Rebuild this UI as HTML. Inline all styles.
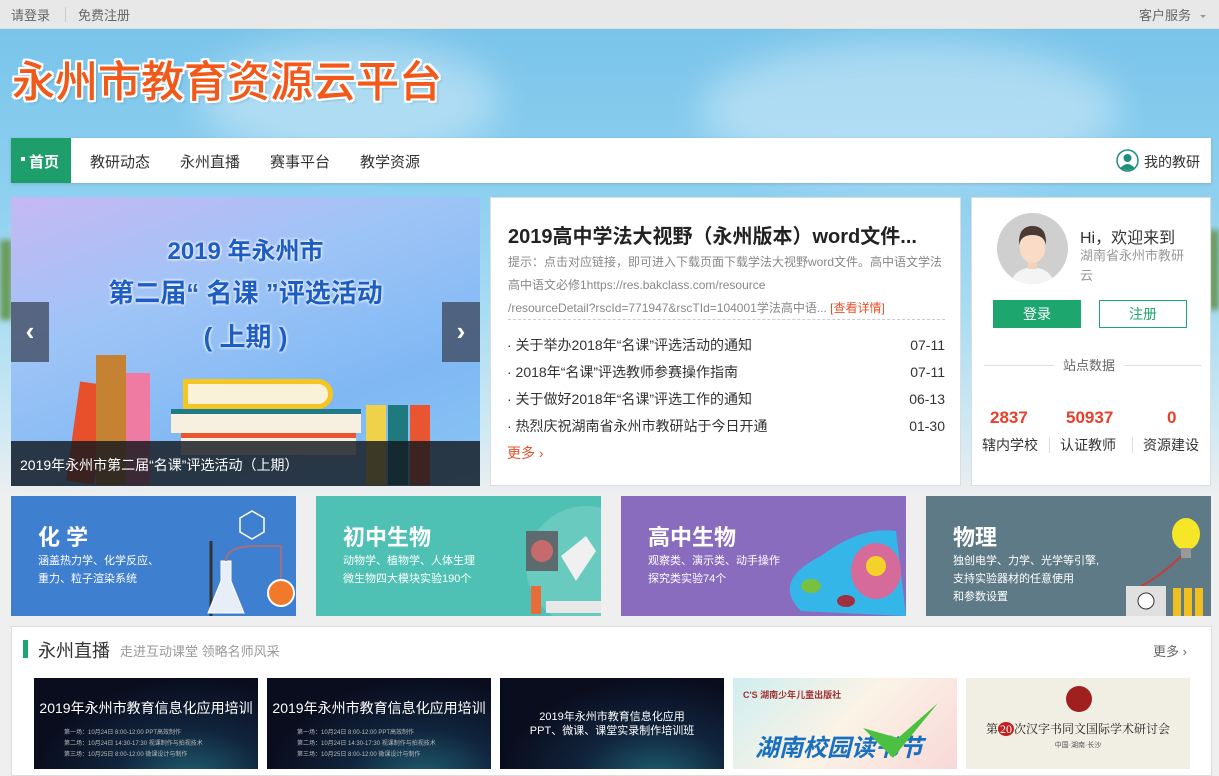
<!DOCTYPE html>
<html><head><meta charset="utf-8">
<style>
*{margin:0;padding:0;box-sizing:border-box}
body{width:1219px;height:769px;overflow:hidden;background:#efefef;font-family:"Liberation Sans","Noto Sans CJK SC","Microsoft YaHei",sans-serif;position:relative;color:#333}
.abs{position:absolute}
.top{left:0;top:0;width:1219px;height:29px;background:#e8e8e8;font-size:13px;color:#666;border-bottom:1px solid #ddd}
.sky{left:0;top:29px;width:1219px;height:470px;background:linear-gradient(180deg,#79c4ea 0%,#8ed0f0 35%,#a8dcf2 60%,#cfe9f3 85%,#efefef 100%)}
.cloud{border-radius:50%;background:rgba(255,255,255,.35);filter:blur(18px)}
.title{left:12px;top:48px;font-size:43px;font-weight:500;color:#f2581a;text-shadow:2px 2px 0 #fff,-2px -2px 0 #fff,2px -2px 0 #fff,-2px 2px 0 #fff,0 2px 0 #fff,2px 0 0 #fff,0 -2px 0 #fff,-2px 0 0 #fff,3px 3px 2px rgba(0,0,0,.15)}
.nav{left:11px;top:138px;width:1200px;height:45px;background:#fff;box-shadow:0 1px 3px rgba(0,0,0,.15);font-size:15px;color:#333}
.nav span{position:absolute;top:13px}
.card{background:#fff;border:1px solid #ddd}
.tile{top:496px;width:285px;height:120px;color:#fff;overflow:hidden}
.tile h3{position:absolute;left:27px;top:24px;font-size:22px;font-weight:bold}
.tile p{position:absolute;left:27px;top:56px;font-size:11px;line-height:18px}
.thumb{top:678px;width:224px;height:91px;overflow:hidden}
.dark{background:radial-gradient(ellipse at 70% 110%,#1f5e70 0%,#10243c 35%,#0a0d1e 70%);color:#fff;text-align:center}
.bt{text-align:center;font-weight:bold;color:#1e5dc2;text-shadow:0 0 3px #fff,0 0 3px #fff;width:469px;left:0}
</style></head><body>
<div class="abs top">
  <span class="abs" style="left:11px;top:5px">请登录</span>
  <span class="abs" style="left:65px;top:7px;width:1px;height:15px;background:#ccc"></span>
  <span class="abs" style="left:78px;top:5px">免费注册</span>
  <span class="abs" style="left:1139px;top:5px">客户服务</span>
  <span class="abs" style="left:1200px;top:15px;border:3px solid transparent;border-top:3px solid #999"></span>
</div>
<div class="abs sky"></div>
<div class="abs cloud" style="left:200px;top:40px;width:300px;height:120px"></div>
<div class="abs cloud" style="left:700px;top:40px;width:420px;height:140px"></div>
<div class="abs" style="left:0;top:240px;width:12px;height:80px;background:#6a9a5a;filter:blur(3px)"></div>
<div class="abs" style="left:1209px;top:230px;width:10px;height:80px;background:#6a9a5a;filter:blur(3px)"></div>
<div class="abs title">永州市教育资源云平台</div>

<div class="abs nav">
  <div class="abs" style="left:0;top:0;width:60px;height:45px;background:#1e9e6a;color:#fff;font-weight:bold">
    <span style="left:10px;top:19px;width:4px;height:4px;background:#fff"></span>
    <span style="left:18px">首页</span>
  </div>
  <span style="left:79px">教研动态</span>
  <span style="left:169px">永州直播</span>
  <span style="left:259px">赛事平台</span>
  <span style="left:349px">教学资源</span>
  <svg class="abs" style="left:1105px;top:11px" width="23" height="23" viewBox="0 0 23 23"><circle cx="11.5" cy="11.5" r="10.5" fill="#fff" stroke="#1e8f7a" stroke-width="1.5"/><circle cx="11.5" cy="9" r="4" fill="#1e8f7a"/><path d="M4.5 19 Q11.5 11 18.5 19 Q11.5 23 4.5 19Z" fill="#1e8f7a"/></svg>
  <span style="left:1133px;font-size:14px;color:#333;top:14px">我的教研</span>
</div>

<div class="abs" style="left:11px;top:197px;width:469px;height:289px;overflow:hidden;background:linear-gradient(160deg,#c6b8f4 0%,#9ec4f6 35%,#7fb8f4 70%,#8ac6f2 100%)">
  <div class="abs bt" style="top:34px;font-size:24px">2019 年永州市</div>
  <div class="abs bt" style="top:76px;font-size:26px">第二届“ 名课 ”评选活动</div>
  <div class="abs bt" style="top:120px;font-size:26px">( 上期 )</div>
  <div class="abs" style="left:62px;top:186px;width:28px;height:100px;background:#e8502c;transform:rotate(8deg)"></div>
  <div class="abs" style="left:85px;top:158px;width:30px;height:130px;background:#c58233"></div>
  <div class="abs" style="left:115px;top:176px;width:24px;height:112px;background:#ef7aa2"></div>
  <div class="abs" style="left:172px;top:182px;width:150px;height:30px;background:#f9f2d8;border:5px solid #f5c521;border-radius:0 16px 16px 0"></div>
  <div class="abs" style="left:160px;top:212px;width:190px;height:24px;background:#f7f0e0;border-top:5px solid #1f7a8a"></div>
  <div class="abs" style="left:170px;top:236px;width:175px;height:22px;background:#f7f0e0;border-top:5px solid #e85530"></div>
  <div class="abs" style="left:355px;top:208px;width:20px;height:80px;background:#f0d24a"></div>
  <div class="abs" style="left:377px;top:208px;width:20px;height:80px;background:#1f7a80"></div>
  <div class="abs" style="left:399px;top:208px;width:20px;height:80px;background:#e85530"></div>
  <div class="abs" style="left:0;top:244px;width:469px;height:45px;background:rgba(20,24,30,.82);color:#fff;font-size:14px;padding:14px 0 0 9px">2019年永州市第二届“名课”评选活动（上期）</div>
  <div class="abs" style="left:0;top:105px;width:38px;height:60px;background:rgba(60,70,90,.75);color:#fff;font-size:26px;text-align:center;line-height:58px;font-weight:bold">‹</div>
  <div class="abs" style="left:431px;top:105px;width:38px;height:60px;background:rgba(60,70,90,.75);color:#fff;font-size:26px;text-align:center;line-height:58px;font-weight:bold">›</div>
</div>

<div class="abs card" style="left:490px;top:197px;width:471px;height:289px">
  <div class="abs" style="left:17px;top:22px;font-size:20px;font-weight:bold;color:#222;white-space:nowrap">2019高中学法大视野（永州版本）word文件...</div>
  <div class="abs" style="left:17px;top:53px;width:440px;font-size:12px;line-height:23px;color:#888">提示：点击对应链接，即可进入下载页面下载学法大视野word文件。高中语文学法高中语文必修1https://res.bakclass.com/resource<br>/resourceDetail?rscId=771947&amp;rscTId=104001学法高中语... <span style="color:#e8502c">[查看详情]</span></div>
  <div class="abs" style="left:17px;top:121px;width:437px;border-top:1px dashed #ccc"></div>
  <div class="abs" style="left:16px;top:134px;width:438px;font-size:14px;line-height:27px;color:#333">
    <div>· 关于举办2018年“名课”评选活动的通知<span style="float:right">07-11</span></div>
    <div>· 2018年“名课”评选教师参赛操作指南<span style="float:right">07-11</span></div>
    <div>· 关于做好2018年“名课”评选工作的通知<span style="float:right">06-13</span></div>
    <div>· 热烈庆祝湖南省永州市教研站于今日开通<span style="float:right">01-30</span></div>
    <div style="color:#e8502c">更多 ›</div>
  </div>
</div>

<div class="abs card" style="left:971px;top:197px;width:240px;height:289px">
  <svg class="abs" style="left:25px;top:15px" width="71" height="71" viewBox="0 0 71 71"><defs><clipPath id="c"><circle cx="35.5" cy="35.5" r="35.5"/></clipPath></defs><g clip-path="url(#c)"><rect width="71" height="71" fill="#cfcfcf"/><path d="M14 71 Q16 56 35.5 54 Q55 56 57 71Z" fill="#f4f4f4"/><rect x="31" y="46" width="9" height="10" fill="#f2d2b8"/><ellipse cx="35.5" cy="34" rx="13" ry="16" fill="#f8dcc6"/><path d="M22 32 Q21 13 35.5 13 Q50 13 49 32 Q47 22 35.5 22 Q24 22 22 32Z" fill="#4a3a33"/></g></svg>
  <div class="abs" style="left:108px;top:26px;font-size:16px;color:#333">Hi，欢迎来到</div>
  <div class="abs" style="left:108px;top:48px;width:106px;font-size:13px;line-height:20px;color:#999">湖南省永州市教研云</div>
  <div class="abs" style="left:21px;top:102px;width:88px;height:28px;background:#1ea66f;color:#fff;font-size:14px;text-align:center;line-height:28px">登录</div>
  <div class="abs" style="left:127px;top:102px;width:88px;height:28px;border:1px solid #1ea66f;color:#1ea66f;font-size:14px;text-align:center;line-height:26px">注册</div>
  <div class="abs" style="left:12px;top:167px;width:70px;border-top:1px solid #ddd"></div>
  <div class="abs" style="left:91px;top:157px;font-size:13px;color:#666">站点数据</div>
  <div class="abs" style="left:153px;top:167px;width:76px;border-top:1px solid #ddd"></div>
  <div class="abs" style="left:0;top:210px;width:240px;font-size:17px;font-weight:bold;color:#e8402a">
    <span class="abs" style="left:18px">2837</span><span class="abs" style="left:94px">50937</span><span class="abs" style="left:195px">0</span>
  </div>
  <div class="abs" style="left:0;top:237px;width:240px;font-size:14px;color:#333">
    <span class="abs" style="left:10px">辖内学校</span><span class="abs" style="left:77px;top:2px;width:1px;height:16px;background:#ddd"></span><span class="abs" style="left:88px">认证教师</span><span class="abs" style="left:160px;top:2px;width:1px;height:16px;background:#ddd"></span><span class="abs" style="left:171px">资源建设</span>
  </div>
</div>

<div class="abs tile" style="left:11px;background:#3f7fd0"><h3>化 学</h3><p>涵盖热力学、化学反应、<br>重力、粒子渲染系统</p>
<svg class="abs" style="left:185px;top:5px" width="100" height="115"><polygon points="56,10 68,17 68,31 56,38 44,31 44,17" fill="none" stroke="#fff" stroke-width="1.5"/><line x1="15" y1="40" x2="15" y2="115" stroke="#333" stroke-width="3"/><path d="M25 60 L35 60 L35 80 L48 112 L12 112 L25 80Z" fill="#e8eef8" stroke="#fff"/><circle cx="85" cy="92" r="13" fill="#f07a2a" stroke="#fff" stroke-width="2"/><path d="M30 60 Q30 45 60 45 L85 45 L85 78" fill="none" stroke="#a07080" stroke-width="2"/></svg></div>
<div class="abs tile" style="left:316px;background:#4fc1b4"><h3>初中生物</h3><p>动物学、植物学、人体生理<br>微生物四大模块实验190个</p>
<svg class="abs" style="left:190px;top:10px" width="95" height="110"><circle cx="80" cy="60" r="60" fill="rgba(255,255,255,.15)"/><rect x="20" y="25" width="32" height="40" fill="#5d6b6e"/><circle cx="36" cy="45" r="11" fill="#c56b6b"/><path d="M55 50 L80 30 L90 45 L70 75Z" fill="#f0f0f0"/><rect x="40" y="95" width="55" height="12" fill="#e8e8e8"/><path d="M25 80 L35 80 L35 108 L25 108Z" fill="#e86b3a"/></svg></div>
<div class="abs tile" style="left:621px;background:#8a6cbf"><h3>高中生物</h3><p>观察类、演示类、动手操作<br>探究类实验74个</p>
<svg class="abs" style="left:150px;top:25px" width="135" height="95"><path d="M30 90 Q0 60 50 35 Q90 5 125 10 L135 95Z" fill="#35b6e8"/><ellipse cx="105" cy="50" rx="25" ry="28" fill="#d66a9a"/><circle cx="105" cy="45" r="10" fill="#f5d22a"/><ellipse cx="40" cy="65" rx="10" ry="7" fill="#7ac040"/><ellipse cx="75" cy="80" rx="9" ry="6" fill="#a03040"/></svg></div>
<div class="abs tile" style="left:926px;background:#5e7a86"><h3>物理</h3><p>独创电学、力学、光学等引擎,<br>支持实验器材的任意使用<br>和参数设置</p>
<svg class="abs" style="left:185px;top:20px" width="100" height="100"><ellipse cx="75" cy="18" rx="14" ry="16" fill="#f5e628"/><rect x="70" y="32" width="10" height="10" fill="#999"/><path d="M70 40 Q50 60 30 70" fill="none" stroke="#c04040" stroke-width="2"/><rect x="15" y="70" width="40" height="30" fill="#e0e0e0"/><circle cx="35" cy="85" r="8" fill="#fff" stroke="#333"/><rect x="62" y="72" width="8" height="28" fill="#f0c020"/><rect x="73" y="72" width="8" height="28" fill="#f0c020"/><rect x="84" y="72" width="8" height="28" fill="#f0c020"/></svg></div>

<div class="abs card" style="left:11px;top:626px;width:1201px;height:150px">
  <div class="abs" style="left:11px;top:13px;width:5px;height:18px;background:#1ea66f"></div>
  <div class="abs" style="left:26px;top:10px;font-size:18px;color:#333">永州直播</div>
  <div class="abs" style="left:108px;top:14px;font-size:13px;color:#999">走进互动课堂 领略名师风采</div>
  <div class="abs" style="left:1141px;top:14px;font-size:13px;color:#666">更多 ›</div>
</div>
<div class="abs thumb dark" style="left:34px"><div style="margin-top:20px;font-size:14px">2019年永州市教育信息化应用培训</div><div style="font-size:6px;color:#bbb;margin-top:10px;line-height:11px;text-align:left;padding-left:30px">第一场：10月24日 8:00-12:00 PPT高效制作<br>第二场：10月24日 14:30-17:30 视课制作与拍视技术<br>第三场：10月25日 8:00-12:00 微课设计与制作</div></div>
<div class="abs thumb dark" style="left:267px"><div style="margin-top:20px;font-size:14px">2019年永州市教育信息化应用培训</div><div style="font-size:6px;color:#bbb;margin-top:10px;line-height:11px;text-align:left;padding-left:30px">第一场：10月24日 8:00-12:00 PPT高效制作<br>第二场：10月24日 14:30-17:30 视课制作与拍视技术<br>第三场：10月25日 8:00-12:00 微课设计与制作</div></div>
<div class="abs thumb dark" style="left:500px"><div style="margin-top:32px;font-size:11px;line-height:14px">2019年永州市教育信息化应用<br>PPT、微课、课堂实录制作培训班</div></div>
<div class="abs thumb" style="left:733px;background:linear-gradient(135deg,#cfeef0 0%,#fbf3e6 50%,#f8d8d8 100%)"><div class="abs" style="left:10px;top:10px;font-size:9px;color:#a03030;font-weight:bold">C'S 湖南少年儿童出版社</div><div class="abs" style="left:22px;top:50px;font-size:24px;font-weight:bold;color:#1a70c0;font-style:italic">湖南校园读书节</div><svg class="abs" style="left:120px;top:20px" width="90" height="70"><path d="M10 30 L40 60 L85 5 L45 40Z" fill="#4cc040"/></svg></div>
<div class="abs thumb" style="left:966px;background:#f1efe4"><div class="abs" style="left:100px;top:8px;width:26px;height:26px;border-radius:50%;background:#a02020"></div><div class="abs" style="left:0;top:42px;width:224px;text-align:center;font-size:12px;color:#222;font-family:'Liberation Serif','Noto Serif CJK SC',serif">第<span style="background:#c02020;color:#fff;border-radius:50%;padding:0 2px">20</span>次汉字书同文国际学术研讨会</div><div class="abs" style="left:0;top:62px;width:224px;text-align:center;font-size:7px;color:#555">中国·湖南·长沙</div></div>
</body></html>
